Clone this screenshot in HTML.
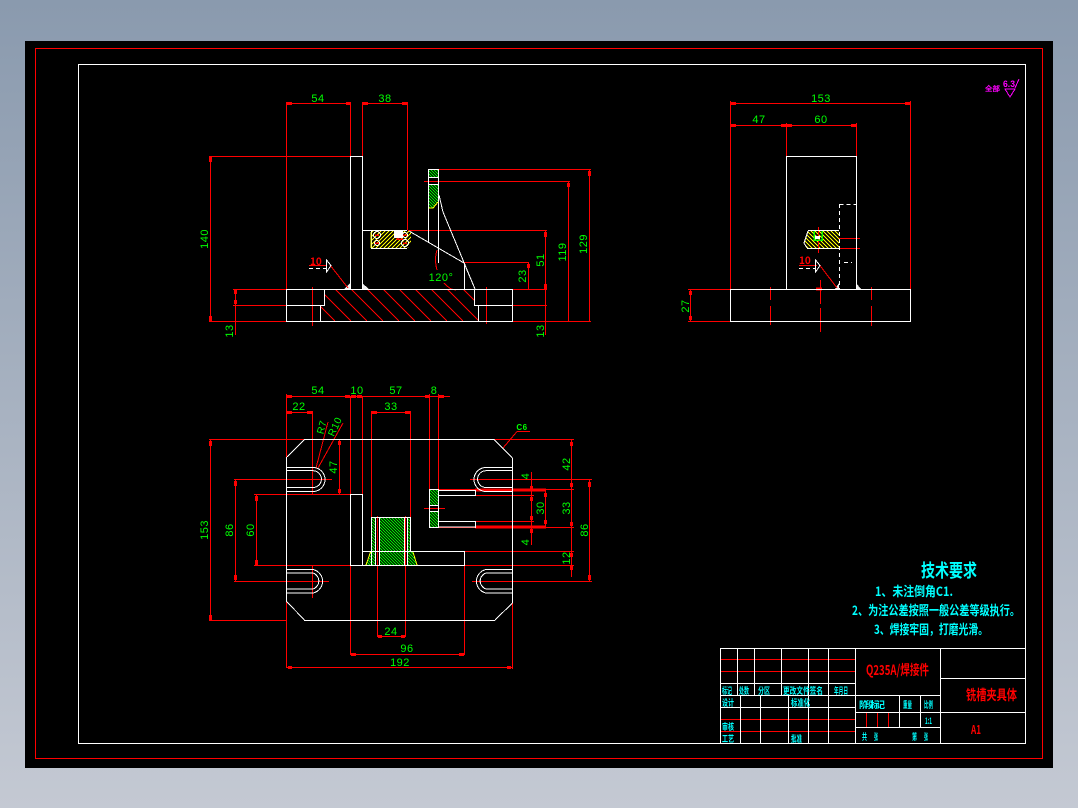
<!DOCTYPE html>
<html><head><meta charset="utf-8"><style>
html,body{margin:0;padding:0;width:1078px;height:808px;overflow:hidden;background:linear-gradient(#8a9aae,#c4c9d3)}
svg{position:absolute;left:0;top:0}
text{font-family:"Liberation Sans","WenQuanYi Zen Hei",sans-serif}
.g text{fill:#0f0;text-anchor:middle}
.c text{fill:#0ff;font-family:"WenQuanYi Zen Hei","Noto Sans CJK SC",sans-serif;font-weight:bold}
.t text{fill:#0ff;font-family:"WenQuanYi Zen Hei","Noto Sans CJK SC",sans-serif}
.r text{fill:#f00;font-family:"WenQuanYi Zen Hei","Noto Sans CJK SC",sans-serif}
</style></head><body>
<svg width="1078" height="808" viewBox="0 0 1078 808" fill="none" stroke-width="1" shape-rendering="crispEdges">
<defs>
<pattern id="ye" width="4" height="4" patternUnits="userSpaceOnUse"><path d="M0 4L4 0M-1 1L1 -1M3 5L5 3" stroke="#ff0"/></pattern>
<pattern id="yb" width="4" height="4" patternUnits="userSpaceOnUse"><path d="M0 0L4 4M-1 3L1 5M3 -1L5 1" stroke="#ff0"/></pattern>
<pattern id="gr" width="3" height="3" patternUnits="userSpaceOnUse"><path d="M0 0L3 3M-1 2L1 4M2 -1L4 1" stroke="#0e0"/></pattern>
<clipPath id="base"><path d="M324.500 289.500H474.500V305.500H478.500V321.500H320.500V305.500H324.500Z"/></clipPath>
</defs>
<rect x="25" y="41" width="1028" height="727" fill="#000"/>
<rect x="35.5" y="48.5" width="1007" height="710" stroke="#f00"/>
<rect x="78.5" y="64.5" width="947" height="679" stroke="#fff"/>

<!-- fills -->
<g stroke="none">
<rect x="429" y="170" width="9" height="8" fill="url(#gr)"/>
<path d="M429 185H438V202L434 208H429Z" fill="url(#gr)"/>
<path d="M372 231H411V243L408 248H372Z" fill="url(#ye)"/>
<path d="M808 231H839V248H807L804 243L805 238Z" fill="url(#yb)"/>
<rect x="372" y="518" width="3" height="33" fill="url(#gr)"/>
<rect x="380" y="518" width="24" height="33" fill="url(#gr)"/>
<rect x="408" y="518" width="3" height="33" fill="url(#gr)"/>
<path d="M370.500 552H375V565H366Z" fill="url(#gr)"/>
<rect x="380" y="552" width="24" height="13" fill="url(#gr)"/>
<path d="M408 552H413L417 565H408Z" fill="url(#gr)"/>
<rect x="430" y="490" width="8" height="15" fill="url(#gr)"/>
<rect x="430" y="512" width="8" height="15" fill="url(#gr)"/>
<path d="M344 289L350 283V289Z" fill="#eee"/>
<path d="M362 283L369 289H362Z" fill="#eee"/>
<path d="M835 289L839 283V289Z" fill="#eee"/>
<path d="M856 283L861 289H856Z" fill="#eee"/>
</g>

<!-- hatch red -->
<g clip-path="url(#base)" stroke="#f00"><path d="M303 289l32 32M319 289l32 32M335 289l32 32M351 289l32 32M367 289l32 32M383 289l32 32M399 289l32 32M415 289l32 32M431 289l32 32M447 289l32 32M463 289l32 32"/></g>

<!-- red dimension lines -->
<path stroke="#f00" d="
M286.500 102V289M350.500 102V156M362.500 102V156M407.500 102V230M286 103.500H351M362 103.500H408
M209 156.500H350M210.500 156V321M209 321.500H286
M233 289.500H286M233 305.500H286M235.500 289V335
M513 289.500H547M513 305.500H547M545.500 230V335M408 230.500H547
M438 169.500H591M424 181.500H570M568.500 181V321M589.500 169V321M513 321.500H591
M464 262.500H529M528.500 262V289M475 289.500H513
M312.500 287V326M486.500 287V324M309 265.500H327
M730.500 101V289M910.500 101V289M730 103.500H911M730 125.500H857M786.500 123V156M856.500 123V156
M690.500 289V321M688 289.500H730M688 321.500H730
M770.500 287V300M770.500 306V325M820.500 280V304M820.500 308V332M871.500 287V300M871.500 306V326
M818.500 227V253M839 238.500H860M839 248.500H860M799 265.500H817
M286.500 394V667M350.500 396V655M362.500 396V494M286 396.500H450M429.500 394V490M438.500 394V490
M286 412.500H313M312.500 411V495M371 412.500H411M371.500 411V518M410.500 411V518
M209 439.500H304M494 439.500H574M209 620.500H287M210.500 439V620
M234 479.500H332M234 581.500H329M235.500 479V581M312.500 565V598
M254 494.500H350M254 565.500H350M256.500 494V565M339.500 439V494
M377.500 516V637M405.500 516V637M377 636.500H406M464.500 565V655M350 654.500H465M286 667.500H513M512.500 603V669
M424 508.500H445M438 489.500H574M475 490.500H546M475 495.500H534M475 521.500H534M475 526.500H546M438 527.500H574
M531.500 472V545M545.500 490V527M571.500 439V577M589.500 479V581M470 479.500H592M472 581.500H592M464 551.500H574M464 565.500H574
M517 431.500H530
M720 659.500H856M720 671.500H856M720 719.500H856M720 731.500H856M866.500 712V727M877.500 712V727M888.500 712V727"/>
<path stroke="#f00" d="M330 265L348 288M820 265.500L837 288M316 468L328 422M318 468L343 423M503 448L517 431.500
M437 250Q434 260 437 270M444 283Q450 290 456 290"/>
<!-- dim ticks -->
<path stroke="#f00" stroke-width="3" d="M287 103.500h5M346 103.500h5M363 103.500h5M402 103.500h5M210.500 157v5M210.500 316v5M235.500 290v4M235.500 300v4M545.500 232v5M545.500 284v5M528.500 264v4M589.500 171v5M568.500 183v4M731 103.500h5M905 103.500h5M731 125.500h5M781 125.500h5M787 125.500h5M851 125.500h5M690.500 291v4M690.500 316v4
M287 396.500h5M345 396.500h5M351 396.500h5M357 396.500h5M425 396.500h5M439 396.500h5M287 412.500h5M307 412.500h5M372 412.500h5M405 412.500h5M210.500 441v5M210.500 615v5M235.500 481v5M235.500 575v5M256.500 496v5M256.500 560v5M339.500 441v4M339.500 489v4M378 636.500h4M401 636.500h4M351 654.500h5M459 654.500h5M288 667.500h4M507 667.500h4
M531.500 486v4M531.500 497v4M531.500 516v4M531.500 529v4M545.500 493v4M545.500 520v4M571.500 483v4M571.500 522v4M571.500 442v4M571.500 553v4M571.500 566v4M589.500 482v5M589.500 575v5M475 490h71M475 527h71M816 289h6"/>

<!-- white object lines -->
<path stroke="#fff" d="
M350.500 156.500V289M362.500 156.500V289M350 156.500H363M362 230.500H407
M286 289.500H513M286 321.500H513M286.500 289V322M324.500 289V306M286 305.500H325M320.500 305V322M474.500 289V306M474 305.500H513M478.500 305V322M512.500 289V322
M428.500 169.500V242M438.500 169.500V263M428 169.500H439M428 177.500H439M428 184.500H439M464.500 263V289
M371.500 231V248.500M371 248.500H407
M786.500 156.500V289M856.500 156.500V289M786 156.500H857M730 289.500H911M730 321.500H911M730.500 289V322M910.500 289V322
M808 230.500H839M807 248.500H839
M304 439.500H494M304 620.500H495M286.500 457V602M512.500 458V603
M350.500 494V566M362.500 494V566M350 494.500H363M350 565.500H465M362 551.500H465M464.500 551V566
M371.500 517.500V566M375.500 517.500V566M379.500 517.500V566M404.500 517.500V566M407.500 517.500V566M410.500 517.500V552M371 517.500H411
M429.500 489.500V527.500M438.500 489.500V527.500M429 489.500H439M429 505.500H439M429 511.500H439M429 527.500H439
M438 490.500H475M438 495.500H475M475.500 490V496M438 521.500H475M438 527H475M475.500 521V528"/>
<path stroke="#fff" stroke-dasharray="4 3" d="M839.500 204V289M839.500 204.500H856M844 262.500H852M309 268.500H326M799 268.500H815"/>
<path stroke="#fff" d="M439 195L443 212L475 289M409 231L464 263L475 289M304.500 439.500L287 457M494 439.500L512.500 458M287 602L304.500 620M512.500 603L495 620
M326.500 260V272L331 265.500ZM815.500 260V272L820 265.500Z
M808 231L804 243L807 248
M287 467.500H313A12 12 0 0 1 313 491.500H287M287 470.700H313A8.400 8.400 0 0 1 313 487.500H287
M287 569.500H313A12 12 0 0 1 313 593H287M287 573H313A8.400 8.400 0 0 1 313 589H287
M512 467.500H486A12 12 0 0 0 486 491.500H512M512 470.700H486A8.400 8.400 0 0 0 486 487.500H512
M512 569.500H486A12 12 0 0 0 486 593H512M512 573H486A8.400 8.400 0 0 0 486 589H512"/>
<circle cx="377" cy="235" r="3.5" stroke="#fff"/><circle cx="377" cy="243" r="2.5" stroke="#fff"/><circle cx="405" cy="243" r="3.5" stroke="#fff"/><circle cx="405" cy="235" r="2.5" stroke="#fff"/>
<path stroke="#f00" stroke-width="1.5" d="M375 235h4M375 243h4M403 243h4M403 235h4M397 231v8h6"/>
<rect x="394" y="231" width="9" height="7" fill="#fff" stroke="none"/>
<path stroke="#ff0" d="M370.500 552L366 565M413 552L417 565M429 208H433L438 202M371 232V248"/>
<path stroke="#0f0" stroke-width="1.5" d="M814 231V240H822V231"/><rect x="815" y="236" width="5" height="3" fill="#fff"/>

<!-- green text -->
<g class="g" style="font-size:11px;letter-spacing:.5px">
<text x="318" y="102">54</text><text x="385" y="102">38</text>
<text x="821" y="102">153</text><text x="759" y="123">47</text><text x="821" y="123">60</text>
<text x="318" y="394">54</text><text x="357" y="394">10</text><text x="396" y="394">57</text><text x="434" y="394">8</text>
<text x="299" y="410">22</text><text x="391" y="410">33</text><text x="391" y="635">24</text><text x="407" y="652">96</text><text x="400" y="666">192</text>
<text x="441" y="281">120°</text>
<text transform="translate(208,239) rotate(-90)">140</text><text transform="translate(233,331) rotate(-90)">13</text><text transform="translate(544,331) rotate(-90)">13</text>
<text transform="translate(526,276) rotate(-90)">23</text><text transform="translate(544,260) rotate(-90)">51</text><text transform="translate(566,252) rotate(-90)">119</text><text transform="translate(587,244) rotate(-90)">129</text>
<text transform="translate(689,306) rotate(-90)">27</text>
<text transform="translate(208,530) rotate(-90)">153</text><text transform="translate(233,530) rotate(-90)">86</text><text transform="translate(254,530) rotate(-90)">60</text>
<text transform="translate(337,467) rotate(-90)">47</text>
<text transform="translate(325,428) rotate(-75)" style="font-size:10px">R7</text><text transform="translate(338,428) rotate(-65)" style="font-size:10px">R10</text>
<text x="522" y="430" style="font-size:8px;font-weight:bold">C6</text>
<text transform="translate(529,476) rotate(-90)">4</text><text transform="translate(529,542) rotate(-90)">4</text>
<text transform="translate(544,508) rotate(-90)">30</text><text transform="translate(570,464) rotate(-90)">42</text><text transform="translate(570,508) rotate(-90)">33</text><text transform="translate(570,558) rotate(-90)">12</text><text transform="translate(588,530) rotate(-90)">86</text>
</g>
<g class="r"><text x="310" y="265" font-size="10" font-weight="bold">10</text><text x="799" y="264" font-size="10" font-weight="bold">10</text>
<text x="866" y="675" font-size="14" font-weight="bold" textLength="63" lengthAdjust="spacingAndGlyphs">Q235A/焊接件</text>
<text x="966" y="700" font-size="14" font-weight="bold" textLength="51" lengthAdjust="spacingAndGlyphs">铣槽夹具体</text>
<text x="971" y="734" font-size="12" font-weight="bold" textLength="10" lengthAdjust="spacingAndGlyphs">A1</text></g>

<!-- magenta symbol -->
<path stroke="#f0f" d="M1005 89H1015L1010 97ZM1015 88L1019 79"/>
<text x="985" y="91" font-size="7" fill="#f0f" font-family="WenQuanYi Zen Hei" font-weight="bold" textLength="15" lengthAdjust="spacingAndGlyphs">全部</text>
<text x="1003" y="87" font-size="9" fill="#f0f" font-weight="bold" textLength="12" lengthAdjust="spacingAndGlyphs">6.3</text>

<!-- tech text -->
<g class="t" font-weight="bold">
<text x="921" y="577" font-size="18" textLength="56" lengthAdjust="spacingAndGlyphs">技术要求</text>
<text x="875" y="596" font-size="13" textLength="78" lengthAdjust="spacingAndGlyphs">1、未注倒角C1.</text>
<text x="852" y="615" font-size="13" textLength="168" lengthAdjust="spacingAndGlyphs">2、为注公差按照一般公差等级执行。</text>
<text x="874" y="634" font-size="13" textLength="114" lengthAdjust="spacingAndGlyphs">3、焊接牢固，打磨光滑。</text>
</g>

<!-- title block -->
<path stroke="#fff" d="
M720 648.500H1026M720.500 648V744M855.500 648V744M940.500 648V744
M720 683.500H856M720 695.500H940M720 707.500H856M737.500 648V695M754.500 648V695M781.500 648V695M808.500 648V695M828.500 648V695
M740.500 695V744M760.500 695V744M788.500 695V744M808.500 695V744M828.500 695V744
M855 712.500H1026M855 727.500H940M899.500 695V727M920.500 695V727M940 678.500H1026"/>
<g class="c" font-size="9">
<text x="722" y="694" textLength="10" lengthAdjust="spacingAndGlyphs">标记</text>
<text x="739" y="694" textLength="10" lengthAdjust="spacingAndGlyphs">处数</text>
<text x="758" y="694" textLength="12" lengthAdjust="spacingAndGlyphs">分区</text>
<text x="783" y="694" textLength="40" lengthAdjust="spacingAndGlyphs">更改文件签名</text>
<text x="834" y="694" textLength="14" lengthAdjust="spacingAndGlyphs">年月日</text>
<text x="722" y="706" textLength="12" lengthAdjust="spacingAndGlyphs">设计</text>
<text x="791" y="706" textLength="19" lengthAdjust="spacingAndGlyphs">标准化</text>
<text x="722" y="730" textLength="12" lengthAdjust="spacingAndGlyphs">审核</text>
<text x="722" y="742" textLength="12" lengthAdjust="spacingAndGlyphs">工艺</text>
<text x="791" y="742" textLength="11" lengthAdjust="spacingAndGlyphs">批准</text>
<text x="859" y="708" textLength="26" lengthAdjust="spacing">阶段标记</text>
<text x="903" y="708" textLength="9" lengthAdjust="spacingAndGlyphs">重量</text>
<text x="924" y="708" textLength="9" lengthAdjust="spacingAndGlyphs">比例</text>
<text x="925" y="724" font-weight="normal" textLength="7" lengthAdjust="spacingAndGlyphs">1:1</text>
<text x="862" y="740" textLength="5" lengthAdjust="spacingAndGlyphs">共</text>
<text x="874" y="740" textLength="4" lengthAdjust="spacingAndGlyphs">张</text>
<text x="912" y="740" textLength="5" lengthAdjust="spacingAndGlyphs">第</text>
<text x="924" y="740" textLength="4" lengthAdjust="spacingAndGlyphs">张</text>
</g>
</svg>
</body></html>
